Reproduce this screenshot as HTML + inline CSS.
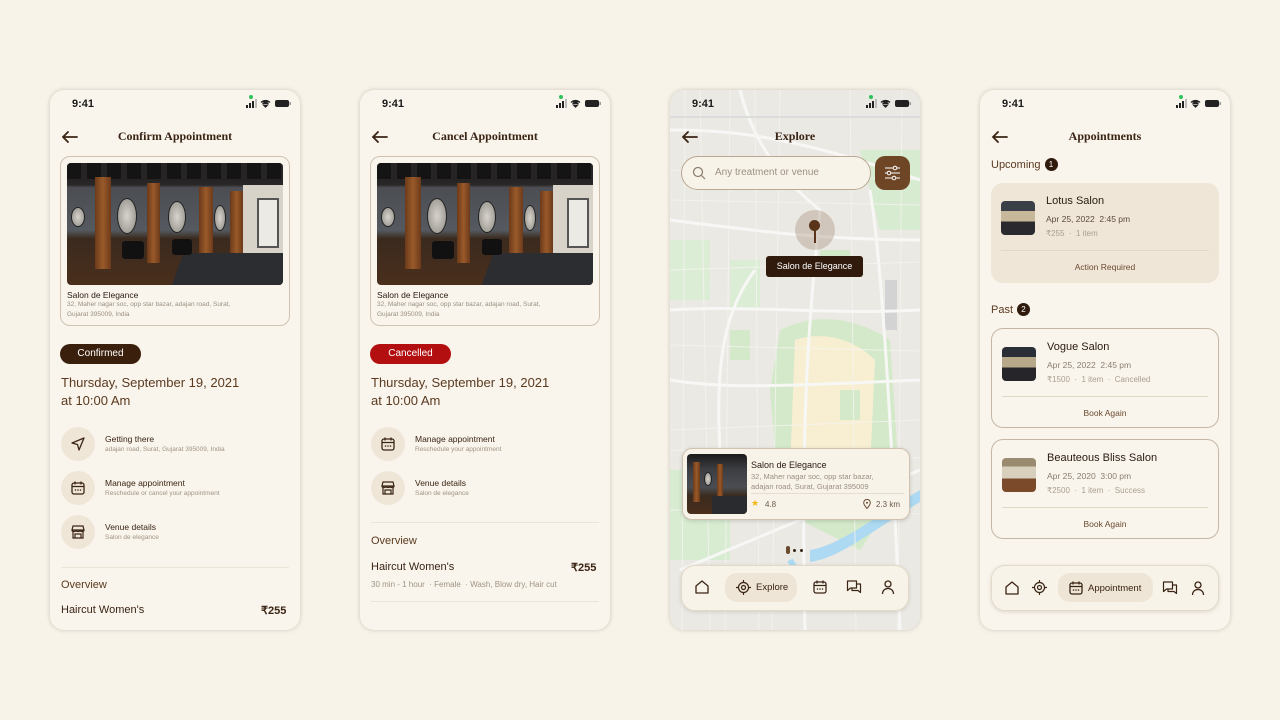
<!DOCTYPE html>
<html><head><meta charset="utf-8"><style>
*{margin:0;padding:0;box-sizing:border-box}
body{width:1280px;height:720px;background:#f7f3e9;font-family:"Liberation Sans",sans-serif;position:relative;overflow:hidden;color:#3a2414}
.ph{position:absolute;top:90px;width:250px;height:540px;background:#f9f5ec;border-radius:14px;box-shadow:0 0 4px rgba(80,60,30,.25);overflow:hidden}
.a{position:absolute}
.time{left:22px;top:8px;font-size:11px;font-weight:bold;color:#1a1a1a}
.gdot{left:199px;top:5px;width:4px;height:4px;border-radius:50%;background:#2ec25a}
.stat{left:196px;top:9px}
.title{left:0;width:250px;top:39px;text-align:center;font-family:"Liberation Serif",serif;font-weight:bold;font-size:12px;color:#3a2414}
.back{left:11px;top:40px}
.card{left:10px;top:66px;width:230px;height:170px;border:1px solid #cfc2b1;border-radius:10px}
.img{left:17px;top:73px;width:216px;height:122px;border-radius:4px;overflow:hidden;background:linear-gradient(#1c1a1a 0,#2a2727 18%,#4b4d52 20%,#555a60 55%,#3a2a1e 62%,#4a2f1c 100%)}
.nm{font-size:8.5px;color:#2a1a10}
.ad{font-size:6.5px;color:#9b8f82;line-height:9.5px}
.pill{left:10px;top:254px;width:81px;height:20px;border-radius:10px;color:#fff;font-size:10px;text-align:center;line-height:20px}
.date{left:11px;font-size:13px;color:#5b3a20;line-height:18px;font-weight:500}
.ic{width:34px;height:34px;border-radius:50%;background:#efe6d8;display:flex;align-items:center;justify-content:center}
.t1{font-size:8.5px;color:#3a2414}
.t2{font-size:6.5px;color:#a09383;margin-top:2px}
.div{left:11px;width:228px;height:1px;background:#ece4d6}
.ov{left:11px;font-size:11px;color:#5b3a20}
.wood{position:absolute;background:linear-gradient(90deg,#6b3a1a,#9a5a2a,#6b3a1a)}
.mir{position:absolute;border-radius:50%;background:radial-gradient(#d8d4cc,#8d8a85);border:1px solid #222}
.nav{left:11px;top:475px;width:228px;height:46px;border-radius:14px;background:#f8f3e9;border:1px solid #e4d9c8;box-shadow:0 1px 4px rgba(0,0,0,.12)}
.sh{font-size:11px;color:#5b3a20}
.badge{display:inline-block;width:13px;height:13px;border-radius:50%;background:#2f1a0c;color:#fff;font-size:8px;text-align:center;line-height:13px;vertical-align:1px;margin-left:4px}
.ac{left:11px;width:228px;height:100px;border-radius:12px}
.th{position:absolute;left:10px;top:18px;width:34px;height:34px;border-radius:4px}
.an{position:absolute;left:55px;top:12px;font-size:11px;font-weight:500;color:#2a1a10}
.ad2{position:absolute;left:55px;top:31px;font-size:8.5px;color:#5b4a3a}
.ad3{position:absolute;left:55px;top:46px;font-size:8px;color:#aa9e90}
.al{position:absolute;left:10px;right:10px;top:67px;height:1px;background:#e2d8c8}
.ab{position:absolute;left:0;right:0;top:79px;text-align:center;font-size:8.5px;color:#6b4a30}
</style></head><body>

<!-- PHONE 1 -->
<div class="ph" style="left:50px">
<div class="a time">9:41</div><div class="a gdot"></div>
<svg class="a stat" width="46" height="9" viewBox="0 0 46 9"><rect x="0" y="6" width="2" height="3" fill="#222"/><rect x="3" y="4" width="2" height="5" fill="#222"/><rect x="6" y="2" width="2" height="7" fill="#222"/><rect x="9" y="0" width="2" height="9" fill="#bbb"/><path d="M15 3.5a6 6 0 0 1 9 0M16.5 5.3a4 4 0 0 1 6 0M19.5 8l1.5-1.5h-3z" stroke="#222" stroke-width="1.3" fill="#222"/><rect x="29" y="1" width="14" height="7" rx="2" fill="#222"/><rect x="43.5" y="3" width="1.3" height="3" fill="#888"/></svg>
<svg class="a back" width="18" height="14" viewBox="0 0 18 14"><path d="M16 7H2M7 2L2 7l5 5" stroke="#3a2414" stroke-width="1.8" fill="none" stroke-linecap="round"/></svg>
<div class="a title">Confirm Appointment</div>
<div class="a card"></div>
<div class="a img">
 <div style="position:absolute;left:0;top:0;width:100%;height:16px;background:repeating-linear-gradient(90deg,#151414 0 14px,#262424 14px 20px)"></div>
 <div class="wood" style="left:28px;top:14px;width:16px;height:92px"></div>
 <div class="wood" style="left:80px;top:20px;width:13px;height:80px"></div>
 <div class="wood" style="left:132px;top:24px;width:14px;height:75px"></div>
 <div class="wood" style="left:163px;top:28px;width:13px;height:70px"></div>
 <div class="mir" style="left:4px;top:44px;width:14px;height:20px"></div>
 <div class="mir" style="left:50px;top:35px;width:20px;height:36px"></div>
 <div class="mir" style="left:101px;top:38px;width:18px;height:32px"></div>
 <div class="mir" style="left:147px;top:42px;width:12px;height:26px"></div>
 <div style="position:absolute;left:176px;top:22px;width:40px;height:70px;background:#d8d3c9"></div>
 <div style="position:absolute;left:190px;top:35px;width:22px;height:50px;background:#eceae5;border:2px solid #555"></div>
 <div style="position:absolute;left:110px;top:90px;width:110px;height:35px;background:#2c2d30;transform:skewX(-20deg)"></div>
 <div style="position:absolute;left:55px;top:78px;width:22px;height:18px;background:#111;border-radius:3px"></div>
 <div style="position:absolute;left:105px;top:76px;width:20px;height:16px;background:#111;border-radius:3px"></div>
</div>
<div class="a nm" style="left:17px;top:200px">Salon de Elegance</div>
<div class="a ad" style="left:17px;top:210px">32, Maher nagar soc, opp star bazar, adajan road, Surat,<br>Gujarat 395009, India</div>
<div class="a pill" style="background:#3a1f0c">Confirmed</div>
<div class="a date" style="top:284px">Thursday, September 19, 2021<br>at 10:00 Am</div>
<div class="a ic" style="left:11px;top:337px"><svg width="16" height="16" viewBox="0 0 16 16"><path d="M2 7L14 2 9 14 7.5 8.5z" stroke="#3a2414" stroke-width="1.3" fill="none" stroke-linejoin="round"/></svg></div>
<div class="a" style="left:55px;top:344px"><div class="t1">Getting there</div><div class="t2">adajan road, Surat, Gujarat 395009, India</div></div>
<div class="a ic" style="left:11px;top:381px"><svg width="16" height="16" viewBox="0 0 16 16"><rect x="2" y="3" width="12" height="11" rx="2" stroke="#3a2414" stroke-width="1.3" fill="none"/><path d="M2 6.5h12M5 1.5v3M11 1.5v3" stroke="#3a2414" stroke-width="1.3"/><circle cx="5.5" cy="10" r=".8" fill="#3a2414"/><circle cx="8" cy="10" r=".8" fill="#3a2414"/><circle cx="10.5" cy="10" r=".8" fill="#3a2414"/></svg></div>
<div class="a" style="left:55px;top:388px"><div class="t1">Manage appointment</div><div class="t2">Reschedule or cancel your appointment</div></div>
<div class="a ic" style="left:11px;top:425px"><svg width="16" height="16" viewBox="0 0 16 16"><path d="M3 2h10l1 4H2zM3 6v8h10V6M2 6c0 2 4 2 4 0 0 2 4 2 4 0 0 2 4 2 4 0M5 14v-4h6v4" stroke="#3a2414" stroke-width="1.2" fill="none"/></svg></div>
<div class="a" style="left:55px;top:432px"><div class="t1">Venue details</div><div class="t2">Salon de elegance</div></div>
<div class="a div" style="top:477px"></div>
<div class="a ov" style="top:489px">Overview</div>
<div class="a" style="left:11px;top:514px;font-size:11px;font-weight:500">Haircut Women's</div>
<div class="a" style="left:211px;top:514px;font-size:11px;font-weight:bold">₹255</div>
</div>

<!-- PHONE 2 -->
<div class="ph" style="left:360px">
<div class="a time">9:41</div><div class="a gdot"></div>
<svg class="a stat" width="46" height="9" viewBox="0 0 46 9"><rect x="0" y="6" width="2" height="3" fill="#222"/><rect x="3" y="4" width="2" height="5" fill="#222"/><rect x="6" y="2" width="2" height="7" fill="#222"/><rect x="9" y="0" width="2" height="9" fill="#bbb"/><path d="M15 3.5a6 6 0 0 1 9 0M16.5 5.3a4 4 0 0 1 6 0M19.5 8l1.5-1.5h-3z" stroke="#222" stroke-width="1.3" fill="#222"/><rect x="29" y="1" width="14" height="7" rx="2" fill="#222"/><rect x="43.5" y="3" width="1.3" height="3" fill="#888"/></svg>
<svg class="a back" width="18" height="14" viewBox="0 0 18 14"><path d="M16 7H2M7 2L2 7l5 5" stroke="#3a2414" stroke-width="1.8" fill="none" stroke-linecap="round"/></svg>
<div class="a title">Cancel Appointment</div>
<div class="a card"></div>
<div class="a img">
 <div style="position:absolute;left:0;top:0;width:100%;height:16px;background:repeating-linear-gradient(90deg,#151414 0 14px,#262424 14px 20px)"></div>
 <div class="wood" style="left:28px;top:14px;width:16px;height:92px"></div>
 <div class="wood" style="left:80px;top:20px;width:13px;height:80px"></div>
 <div class="wood" style="left:132px;top:24px;width:14px;height:75px"></div>
 <div class="wood" style="left:163px;top:28px;width:13px;height:70px"></div>
 <div class="mir" style="left:4px;top:44px;width:14px;height:20px"></div>
 <div class="mir" style="left:50px;top:35px;width:20px;height:36px"></div>
 <div class="mir" style="left:101px;top:38px;width:18px;height:32px"></div>
 <div class="mir" style="left:147px;top:42px;width:12px;height:26px"></div>
 <div style="position:absolute;left:176px;top:22px;width:40px;height:70px;background:#d8d3c9"></div>
 <div style="position:absolute;left:190px;top:35px;width:22px;height:50px;background:#eceae5;border:2px solid #555"></div>
 <div style="position:absolute;left:110px;top:90px;width:110px;height:35px;background:#2c2d30;transform:skewX(-20deg)"></div>
 <div style="position:absolute;left:55px;top:78px;width:22px;height:18px;background:#111;border-radius:3px"></div>
 <div style="position:absolute;left:105px;top:76px;width:20px;height:16px;background:#111;border-radius:3px"></div>
</div>
<div class="a nm" style="left:17px;top:200px">Salon de Elegance</div>
<div class="a ad" style="left:17px;top:210px">32, Maher nagar soc, opp star bazar, adajan road, Surat,<br>Gujarat 395009, India</div>
<div class="a pill" style="background:#b30f10">Cancelled</div>
<div class="a date" style="top:284px">Thursday, September 19, 2021<br>at 10:00 Am</div>
<div class="a ic" style="left:11px;top:337px"><svg width="16" height="16" viewBox="0 0 16 16"><rect x="2" y="3" width="12" height="11" rx="2" stroke="#3a2414" stroke-width="1.3" fill="none"/><path d="M2 6.5h12M5 1.5v3M11 1.5v3" stroke="#3a2414" stroke-width="1.3"/><circle cx="5.5" cy="10" r=".8" fill="#3a2414"/><circle cx="8" cy="10" r=".8" fill="#3a2414"/><circle cx="10.5" cy="10" r=".8" fill="#3a2414"/></svg></div>
<div class="a" style="left:55px;top:344px"><div class="t1">Manage appointment</div><div class="t2">Reschedule your appointment</div></div>
<div class="a ic" style="left:11px;top:381px"><svg width="16" height="16" viewBox="0 0 16 16"><path d="M3 2h10l1 4H2zM3 6v8h10V6M2 6c0 2 4 2 4 0 0 2 4 2 4 0 0 2 4 2 4 0M5 14v-4h6v4" stroke="#3a2414" stroke-width="1.2" fill="none"/></svg></div>
<div class="a" style="left:55px;top:388px"><div class="t1">Venue details</div><div class="t2">Salon de elegance</div></div>
<div class="a div" style="top:432px"></div>
<div class="a ov" style="top:445px">Overview</div>
<div class="a" style="left:11px;top:471px;font-size:11px;font-weight:500">Haircut Women's</div>
<div class="a" style="left:211px;top:471px;font-size:11px;font-weight:bold">₹255</div>
<div class="a" style="left:11px;top:490px;font-size:8px;color:#a09383">30 min - 1 hour &nbsp;· Female &nbsp;· Wash, Blow dry, Hair cut</div>
<div class="a div" style="top:511px"></div>
</div>

<!-- PHONE 3 MAP -->
<div class="ph" style="left:670px;background:#eceae4">
<svg class="a" style="left:0;top:0" width="250" height="540" viewBox="0 0 250 540">
<rect width="250" height="540" fill="#ebe9e3"/>
<path d="M190 60h60v80h-40z" fill="#d6ebcf"/><path d="M0 150h40v60H0z" fill="#dcedd6"/>
<path d="M0 380h60v90H0z" fill="#d8ecd2"/><path d="M60 170h30v50H60z" fill="#dcedd6"/>
<path d="M110 240c40-20 80-10 110 10l10 150-40 60-80-40-10-120z" fill="#d3e9ca"/>
<path d="M125 250c30-10 60 0 80 20l-5 110-40 40-40-40z" fill="#f8efd3"/>
<path d="M60 240h20v30H60zM170 300h20v30h-20zM150 160h30v20h-30z" fill="#d3e9ca"/>
<path d="M140 460c30-5 60-30 110-60v12c-50 30-80 56-110 60z" fill="#addaf2"/>
<path d="M120 470c10 20 40 30 50 20" stroke="#addaf2" stroke-width="6" fill="none"/>
<rect x="215" y="190" width="12" height="50" fill="#d3d3d3"/>
<g stroke="#f7f7f5" stroke-width="3" fill="none">
<path d="M0 40c60 0 120 5 250 50"/><path d="M0 130c80 10 150 20 250 20"/><path d="M85 180c-30 40-40 90-35 180"/>
<path d="M0 290c60 10 130 5 250 0"/><path d="M10 480L250 380"/><path d="M70 0c10 40 30 80 80 120"/>
<path d="M200 100c10 60 20 200 30 440"/><path d="M0 220c80 -5 160 5 250 0"/><path d="M150 120c-10 100 -20 200 -15 420"/>
</g>
<g stroke="#f5f4f0" stroke-width="1" fill="none" opacity=".8">
<path d="M0 80l250 10M0 180l250-8M0 255l250 6M0 340l250-10M0 420l250 4M30 0l10 540M110 0l-8 540M180 0l6 540M60 0l-5 540M232 0l-4 540M0 110l250 5M0 360l250 8M85 0l4 540M15 0l-3 540"/>
</g>
<path d="M0 27h250" stroke="#dcdcdc" stroke-width="2"/>
</svg>
<div class="a time">9:41</div><div class="a gdot"></div>
<svg class="a stat" width="46" height="9" viewBox="0 0 46 9"><rect x="0" y="6" width="2" height="3" fill="#222"/><rect x="3" y="4" width="2" height="5" fill="#222"/><rect x="6" y="2" width="2" height="7" fill="#222"/><rect x="9" y="0" width="2" height="9" fill="#bbb"/><path d="M15 3.5a6 6 0 0 1 9 0M16.5 5.3a4 4 0 0 1 6 0M19.5 8l1.5-1.5h-3z" stroke="#222" stroke-width="1.3" fill="#222"/><rect x="29" y="1" width="14" height="7" rx="2" fill="#222"/><rect x="43.5" y="3" width="1.3" height="3" fill="#888"/></svg>
<svg class="a back" width="18" height="14" viewBox="0 0 18 14"><path d="M16 7H2M7 2L2 7l5 5" stroke="#3a2414" stroke-width="1.8" fill="none" stroke-linecap="round"/></svg>
<div class="a title">Explore</div>
<div class="a" style="left:11px;top:66px;width:190px;height:34px;border-radius:17px;background:#f8f3e9;border:1px solid #b9a892"></div>
<svg class="a" style="left:22px;top:76px" width="14" height="14" viewBox="0 0 14 14"><circle cx="6" cy="6" r="4.5" stroke="#8a7a6a" stroke-width="1.2" fill="none"/><path d="M9.5 9.5L13 13" stroke="#8a7a6a" stroke-width="1.2"/></svg>
<div class="a" style="left:45px;top:77px;font-size:10px;color:#9b8f82">Any treatment or venue</div>
<div class="a" style="left:205px;top:66px;width:35px;height:34px;border-radius:10px;background:#6e4626"></div>
<svg class="a" style="left:214px;top:75px" width="17" height="16" viewBox="0 0 17 16"><path d="M1 3h15M1 8h15M1 13h15" stroke="#fff" stroke-width="1.1"/><circle cx="11" cy="3" r="1.8" fill="#6e4626" stroke="#fff"/><circle cx="5" cy="8" r="1.8" fill="#6e4626" stroke="#fff"/><circle cx="10" cy="13" r="1.8" fill="#6e4626" stroke="#fff"/></svg>
<div class="a" style="left:125px;top:120px;width:40px;height:40px;border-radius:50%;background:rgba(150,120,95,.3)"></div>
<div class="a" style="left:139px;top:130px;width:11px;height:11px;border-radius:50%;background:#5a3418"></div>
<div class="a" style="left:144px;top:140px;width:1.5px;height:13px;background:#5a3418"></div>
<div class="a" style="left:96px;top:166px;width:97px;height:21px;border-radius:3px;background:#2f1a0c;color:#fff;font-size:9px;text-align:center;line-height:21px">Salon de Elegance</div>
<div class="a" style="left:12px;top:358px;width:228px;height:72px;border-radius:10px;background:#f8f3e9;border:1px solid #cfc2b1;box-shadow:0 1px 4px rgba(0,0,0,.15)"></div>
<div class="a" style="left:17px;top:364px;width:60px;height:60px;border-radius:4px;background:linear-gradient(#1c1a1a 0,#3b3d42 25%,#4b4d52 55%,#3a2a1e 70%,#4a2f1c);overflow:hidden"><div class="wood" style="left:6px;top:8px;width:7px;height:40px"></div><div class="wood" style="left:30px;top:10px;width:6px;height:36px"></div><div class="mir" style="left:17px;top:18px;width:8px;height:14px"></div><div style="position:absolute;left:25px;top:42px;width:40px;height:18px;background:#2a2b2e"></div></div>
<div class="a" style="left:81px;top:370px;font-size:9px;color:#2a1a10">Salon de Elegance</div>
<div class="a" style="left:81px;top:382px;font-size:7.5px;color:#9b8f82;line-height:9.5px">32, Maher nagar soc, opp star bazar,<br>adajan road, Surat, Gujarat 395009</div>
<div class="a" style="left:81px;top:403px;width:153px;height:1px;background:#e6ddd0"></div>
<div class="a" style="left:81px;top:408px;font-size:9px;color:#f1b814">★</div>
<div class="a" style="left:95px;top:410px;font-size:8px;color:#6b5a4a">4.8</div>
<svg class="a" style="left:193px;top:409px" width="8" height="10" viewBox="0 0 8 10"><path d="M4 9.5C1 6 .7 4.5.7 3.7a3.3 3.3 0 0 1 6.6 0c0 .8-.3 2.3-3.3 5.8z" stroke="#6b4a30" fill="none"/><circle cx="4" cy="3.7" r="1" fill="#6b4a30"/></svg>
<div class="a" style="left:206px;top:410px;font-size:8px;color:#6b5a4a">2.3 km</div>
<div class="a" style="left:116px;top:456px;width:4px;height:8px;border-radius:2px;background:#6b4a30"></div>
<div class="a" style="left:123px;top:459px;width:3px;height:3px;border-radius:50%;background:#3a2414"></div>
<div class="a" style="left:130px;top:459px;width:3px;height:3px;border-radius:50%;background:#3a2414"></div>
<div class="a nav"></div>
<svg class="a" style="left:24px;top:489px" width="16" height="16" viewBox="0 0 16 16"><path d="M2 7L8 2l6 5v7H2z" stroke="#3a2414" stroke-width="1.3" fill="none" stroke-linejoin="round"/></svg>
<div class="a" style="left:55px;top:483px;width:72px;height:29px;border-radius:12px;background:#eee5d6"></div>
<svg class="a" style="left:66px;top:490px" width="15" height="15" viewBox="0 0 15 15"><circle cx="7.5" cy="7.5" r="5" stroke="#3a2414" stroke-width="1.2" fill="none"/><circle cx="7.5" cy="7.5" r="2" stroke="#3a2414" stroke-width="1.2" fill="none"/><path d="M7.5 0v2.5M7.5 12.5V15M0 7.5h2.5M12.5 7.5H15" stroke="#3a2414" stroke-width="1.2"/></svg>
<div class="a" style="left:86px;top:492px;font-size:9.5px;color:#3a2414">Explore</div>
<svg class="a" style="left:142px;top:489px" width="16" height="16" viewBox="0 0 16 16"><rect x="2" y="3" width="12" height="11" rx="2" stroke="#3a2414" stroke-width="1.3" fill="none"/><path d="M2 6.5h12M5 1.5v3M11 1.5v3" stroke="#3a2414" stroke-width="1.3"/><circle cx="5.5" cy="10" r=".8" fill="#3a2414"/><circle cx="8" cy="10" r=".8" fill="#3a2414"/><circle cx="10.5" cy="10" r=".8" fill="#3a2414"/></svg>
<svg class="a" style="left:176px;top:489px" width="16" height="16" viewBox="0 0 16 16"><path d="M1.5 2h9v7h-6l-3 2.5zM10.5 5h4v8.5L12 11.5H6V9" stroke="#3a2414" stroke-width="1.2" fill="none" stroke-linejoin="round"/></svg>
<svg class="a" style="left:210px;top:489px" width="16" height="16" viewBox="0 0 16 16"><circle cx="8" cy="5" r="3" stroke="#3a2414" stroke-width="1.3" fill="none"/><path d="M2.5 15c0-3.5 2.5-5.5 5.5-5.5s5.5 2 5.5 5.5" stroke="#3a2414" stroke-width="1.3" fill="none"/></svg>
</div>

<!-- PHONE 4 -->
<div class="ph" style="left:980px">
<div class="a time">9:41</div><div class="a gdot"></div>
<svg class="a stat" width="46" height="9" viewBox="0 0 46 9"><rect x="0" y="6" width="2" height="3" fill="#222"/><rect x="3" y="4" width="2" height="5" fill="#222"/><rect x="6" y="2" width="2" height="7" fill="#222"/><rect x="9" y="0" width="2" height="9" fill="#bbb"/><path d="M15 3.5a6 6 0 0 1 9 0M16.5 5.3a4 4 0 0 1 6 0M19.5 8l1.5-1.5h-3z" stroke="#222" stroke-width="1.3" fill="#222"/><rect x="29" y="1" width="14" height="7" rx="2" fill="#222"/><rect x="43.5" y="3" width="1.3" height="3" fill="#888"/></svg>
<svg class="a back" width="18" height="14" viewBox="0 0 18 14"><path d="M16 7H2M7 2L2 7l5 5" stroke="#3a2414" stroke-width="1.8" fill="none" stroke-linecap="round"/></svg>
<div class="a title">Appointments</div>
<div class="a sh" style="left:11px;top:68px">Upcoming<span class="badge">1</span></div>
<div class="a ac" style="top:93px;background:#efe6d8">
 <div class="th" style="background:linear-gradient(#3a3f48 0 30%,#c8b89a 30% 60%,#2a2a2e 60%)"></div>
 <div class="an">Lotus Salon</div><div class="ad2">Apr 25, 2022 &nbsp;2:45 pm</div><div class="ad3">₹255 &nbsp;· &nbsp;1 item</div>
 <div class="al"></div><div class="ab">Action Required</div>
</div>
<div class="a sh" style="left:11px;top:213px">Past<span class="badge">2</span></div>
<div class="a ac" style="top:238px;border:1px solid #c5b7a5">
 <div class="th" style="background:linear-gradient(#2a2e36 0 30%,#b8a88a 30% 60%,#26262a 60%)"></div>
 <div class="an">Vogue Salon</div><div class="ad2" style="color:#8a7d70">Apr 25, 2022 &nbsp;2:45 pm</div><div class="ad3">₹1500 &nbsp;· &nbsp;1 item &nbsp;· &nbsp;Cancelled</div>
 <div class="al"></div><div class="ab">Book Again</div>
</div>
<div class="a ac" style="top:349px;border:1px solid #c5b7a5">
 <div class="th" style="background:linear-gradient(#9a8a70 0 25%,#d8cfbd 25% 60%,#7a4a2a 60%)"></div>
 <div class="an">Beauteous Bliss Salon</div><div class="ad2" style="color:#8a7d70">Apr 25, 2020 &nbsp;3:00 pm</div><div class="ad3">₹2500 &nbsp;· &nbsp;1 item &nbsp;· &nbsp;Success</div>
 <div class="al"></div><div class="ab">Book Again</div>
</div>
<div class="a nav"></div>
<svg class="a" style="left:24px;top:490px" width="16" height="16" viewBox="0 0 16 16"><path d="M2 7L8 2l6 5v7H2z" stroke="#3a2414" stroke-width="1.3" fill="none" stroke-linejoin="round"/></svg>
<svg class="a" style="left:52px;top:490px" width="15" height="15" viewBox="0 0 15 15"><circle cx="7.5" cy="7.5" r="5" stroke="#3a2414" stroke-width="1.2" fill="none"/><circle cx="7.5" cy="7.5" r="2" stroke="#3a2414" stroke-width="1.2" fill="none"/><path d="M7.5 0v2.5M7.5 12.5V15M0 7.5h2.5M12.5 7.5H15" stroke="#3a2414" stroke-width="1.2"/></svg>
<div class="a" style="left:78px;top:483px;width:95px;height:29px;border-radius:12px;background:#eee5d6"></div>
<svg class="a" style="left:88px;top:490px" width="16" height="16" viewBox="0 0 16 16"><rect x="2" y="3" width="12" height="11" rx="2" stroke="#3a2414" stroke-width="1.3" fill="none"/><path d="M2 6.5h12M5 1.5v3M11 1.5v3" stroke="#3a2414" stroke-width="1.3"/><circle cx="5.5" cy="10" r=".8" fill="#3a2414"/><circle cx="8" cy="10" r=".8" fill="#3a2414"/><circle cx="10.5" cy="10" r=".8" fill="#3a2414"/></svg>
<div class="a" style="left:108px;top:493px;font-size:9.5px;color:#3a2414">Appointment</div>
<svg class="a" style="left:182px;top:490px" width="16" height="16" viewBox="0 0 16 16"><path d="M1.5 2h9v7h-6l-3 2.5zM10.5 5h4v8.5L12 11.5H6V9" stroke="#3a2414" stroke-width="1.2" fill="none" stroke-linejoin="round"/></svg>
<svg class="a" style="left:210px;top:490px" width="16" height="16" viewBox="0 0 16 16"><circle cx="8" cy="5" r="3" stroke="#3a2414" stroke-width="1.3" fill="none"/><path d="M2.5 15c0-3.5 2.5-5.5 5.5-5.5s5.5 2 5.5 5.5" stroke="#3a2414" stroke-width="1.3" fill="none"/></svg>
</div>
</body></html>
